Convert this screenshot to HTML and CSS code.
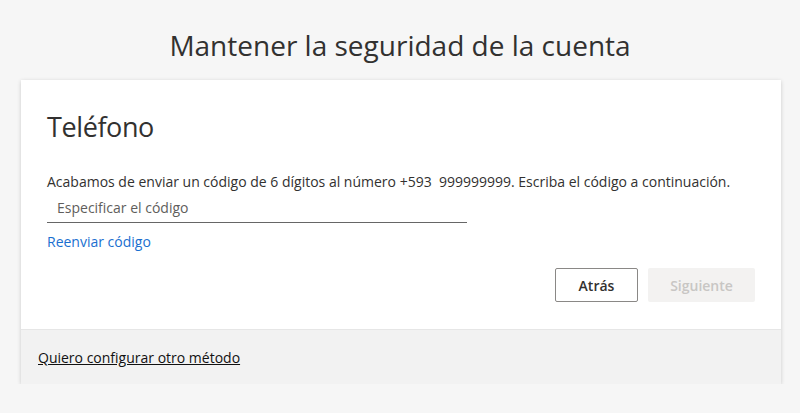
FILE: index.html
```html
<!DOCTYPE html>
<html>
<head>
  <title>Mantener la seguridad de la cuenta</title>
  <link rel="stylesheet" href="styles.css">
</head>
<body>
  <h1 class="page-title">Mantener la seguridad de la cuenta</h1>

  <div class="card">
    <div class="card-body">
      <h2 class="method-title">Teléfono</h2>
      <p class="message">Acabamos de enviar un código de 6 dígitos al número +593 &nbsp;999999999. Escriba el código a continuación.</p>
      <input type="text" class="code-input" placeholder="Especificar el código">
      <a href="#" class="resend">Reenviar código</a>
      <div class="actions">
        <button class="btn btn-back">Atrás</button>
        <button class="btn btn-next" disabled>Siguiente</button>
      </div>
    </div>
    <div class="card-footer">
      <a href="#" class="other-method">Quiero configurar otro método</a>
    </div>
  </div>
</body>
</html>
```

FILE: styles.css
```css
body {
  margin: 0;
  background-color: #f6f6f6;
  font-family: "Open Sans", "Noto Sans", sans-serif;
  color: #323130;
}

.page-title {
  margin: 27px 0 17px;
  font-size: 28px;
  font-weight: 400;
  line-height: 36px;
  text-align: center;
  color: #323130;
}

.card {
  margin: 0 19px 0 21px;
  background-color: #fff;
  box-shadow: 0 1px 4px rgba(0, 0, 0, 0.18);
}

.card-body {
  padding: 29px 26px 27px;
}

.method-title {
  margin: 0;
  font-size: 27px;
  font-weight: 400;
  letter-spacing: -0.4px;
  line-height: 36px;
}

.message {
  margin: 27px 0 0;
  font-size: 14px;
  line-height: 20px;
}

.code-input {
  display: block;
  box-sizing: border-box;
  width: 420px;
  height: 31px;
  margin-top: 0;
  padding: 0 10px;
  border: none;
  border-bottom: 1px solid #666;
  background: transparent;
  font-family: inherit;
  font-size: 14px;
  outline: none;
}

.code-input::placeholder {
  color: #605e5c;
}

.resend {
  display: inline-block;
  margin-top: 9px;
  font-size: 14px;
  line-height: 20px;
  color: #1a6fd0;
  text-decoration: none;
}

.actions {
  display: flex;
  justify-content: flex-end;
  gap: 10px;
  margin-top: 16px;
}

.btn {
  height: 34px;
  font-family: inherit;
  font-size: 14px;
  font-weight: 600;
  cursor: pointer;
}

.btn-back {
  width: 83px;
  background-color: #fff;
  border: 1px solid #8a8886;
  border-radius: 2px;
  color: #323130;
}

.btn-next {
  width: 107px;
  background-color: #f3f2f1;
  border: none;
  border-radius: 2px;
  color: #c8c6c4;
  cursor: default;
}

.card-footer {
  display: flex;
  align-items: center;
  height: 54px;
  padding-left: 17px;
  background-color: #f2f2f2;
  border-top: 1px solid #e6e6e6;
}

.other-method {
  font-size: 14px;
  color: #111;
  text-decoration: underline;
}
```
